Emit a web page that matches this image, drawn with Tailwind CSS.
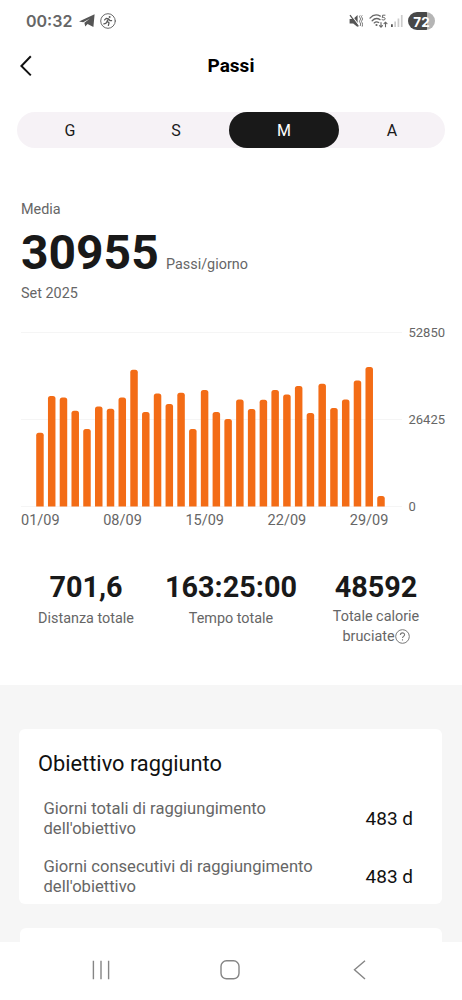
<!DOCTYPE html>
<html lang="it">
<head>
<meta charset="utf-8">
<title>Passi</title>
<script src="https://cdn.jsdelivr.net/npm/@tailwindcss/browser@4"></script>
</head>
<body class="w-[462px] h-[1000px] overflow-hidden bg-white flex flex-col font-['Roboto',sans-serif] text-[#1a1a1a] whitespace-nowrap">
<!-- Status bar -->
<header class="h-[42px] shrink-0 flex items-center justify-between pl-[26px] pr-[27px] text-[#666]">
  <div class="flex items-center">
    <span class="w-[53px] font-['Inter',sans-serif] font-semibold text-[16px] leading-5">00:32</span>
    <svg class="w-4 h-[14px]" viewBox="0 0 16 14"><path d="M0 7.4 15.6.3 14.4 13 8.6 10 6.2 12.6 5.4 8.8 11 4.4 4.2 8.2Z" fill="#555"/></svg>
    <svg class="ml-[5px] w-4 h-4" viewBox="0 0 16 16" fill="none" stroke="#5a5a5a" stroke-linecap="round" stroke-linejoin="round"><circle cx="8" cy="8" r="7.3" stroke-width=".9"/><circle cx="9.6" cy="3.9" r="1" fill="#5a5a5a" stroke="none"/><path d="M4.6 6.9 6.2 5.4 8.6 5.9 7 8.4 9 9.8 8.4 12.3M6.7 9 5.8 10.4 3.9 10.8M8.8 6.2 9.9 7.7 11.6 7.6" stroke-width="1.3"/></svg>
  </div>
  <div class="flex items-center">
    <svg class="w-[14px] h-[14px]" viewBox="0 0 14 14"><path d="M.6 4.9H4.2L8.6 1V13L4.2 9.5H.6Z" fill="#555"/><path d="M1.8.6 9.6 10.8" stroke="#fff" stroke-width="1.2"/><path d="M1 1.2 9.4 12.4" stroke="#555" stroke-width="1.2"/><path d="M11.2 1.4Q9.8 2.6 11 3.8T11 6.2 11 8.6 11.2 12M13.2 1.4Q11.8 2.6 13 3.8T13 6.2 13 8.6 13.2 12.6" fill="none" stroke="#666" stroke-width=".9"/></svg>
    <svg class="ml-[6px] w-[19px] h-[14px]" viewBox="0 0 19 14" fill="none" stroke="#666" stroke-width="1.3" stroke-linecap="round"><path d="M1 4.1C4 .7 8 .3 11.3 2.1M3.2 6.7C5.4 4.4 8.5 4.1 11 5.6M5.2 8.9C6.5 7.7 8.3 7.6 9.7 8.5"/><circle cx="7.5" cy="11" r="1.1" fill="#666" stroke="none"/><path d="M16 1.2H13.6L13.3 3.6C15.2 3 16.3 3.7 16.1 5 15.9 6.2 14.2 6.3 13 5.6" stroke-width="1"/><path d="M12 8.5V13M10.5 11.6 12 13.1 13.5 11.6M16.5 12.8V8.3M15 9.7 16.5 8.2 18 9.7" stroke-width="1.1"/></svg>
    <svg class="ml-[3px] w-3 h-[14px]" viewBox="0 0 12 14"><path d="M0 10.2H1.8V13H0Z" fill="#555"/><path d="M3.3 7.6H5V13H3.3ZM6.6 4.5H8.3V13H6.6ZM9.9.9H11.6V13H9.9Z" fill="#ccc"/></svg>
    <div class="ml-[5px] w-[27px] h-[18px] pt-px rounded-full bg-linear-to-r from-[#484848] from-[72%] to-[#b5b5b5] to-[72%] flex items-center justify-center font-['Inter',sans-serif] font-bold text-[13.5px] leading-4 text-white">72</div>
  </div>
</header>
<!-- Title bar -->
<div class="h-[48px] shrink-0 grid grid-cols-3 items-center pl-5 pr-5">
  <svg class="w-3 h-[22px]" viewBox="0 0 12 22" fill="none" stroke="#111" stroke-width="2"><path d="M10.8 1.2 1.4 11 10.8 20.4"/></svg>
  <h1 class="text-center font-bold text-[19px] leading-6 text-black">Passi</h1>
</div>
<!-- Period tabs -->
<nav class="mt-[22px] mx-[17px] h-9 shrink-0 rounded-full bg-[#f6f2f6] flex text-[16px] text-center leading-[37px]">
  <span class="w-[106px]">G</span><span class="w-[106px]">S</span><span class="w-[110px] rounded-full bg-[#191919] text-white">M</span><span class="w-[106px]">A</span>
</nav>
<!-- Average -->
<section class="mt-[51px] pl-[21px] shrink-0 text-[#666] text-[14.4px]">
  <p class="leading-[22px]">Media</p>
  <p class="flex items-baseline h-[62px] leading-[64px]"><span class="text-[48px] font-bold text-[#191919] w-[145px]">30955</span><span>Passi/giorno</span></p>
  <p class="leading-[22px]">Set 2025</p>
</section>
<!-- Chart -->
<section class="mt-[27px] pl-[21px] h-[200px] shrink-0 flex text-[#666]">
  <div class="w-[381px]">
    <svg id="plot" class="block w-[381px] h-[175px]" viewBox="0 0 381 175"><path d="M0 .5H381M0 87.5H381M0 174.5H381" stroke="#f5f5f5"/></svg>
    <div class="h-6 w-[411px] flex text-[14.5px] leading-[27px]">
      <span class="w-[82.3px]">01/09</span><span class="w-[82.3px]">08/09</span><span class="w-[82.3px]">15/09</span><span class="w-[82.3px]">22/09</span><span class="w-[82.3px]">29/09</span>
    </div>
  </div>
  <div class="pl-[6.5px] -mt-[7px] h-[190px] flex flex-col justify-between text-[13px] leading-4"><span>52850</span><span>26425</span><span>0</span></div>
</section>
<!-- Totals -->
<section class="mt-[38px] h-[115px] shrink-0 flex text-center text-[14.4px] text-[#666]">
  <div class="ml-[20px] w-[132px]"><p class="text-[28.8px] leading-[34px] font-bold text-[#191919]">701,6</p><p class="mt-[5px] leading-5">Distanza totale</p></div>
  <div class="ml-[10px] w-[138px]"><p class="text-[28.8px] leading-[34px] font-bold text-[#191919]">163:25:00</p><p class="mt-[5px] leading-5">Tempo totale</p></div>
  <div class="ml-[10px] w-[132px]"><p class="text-[28.8px] leading-[34px] font-bold text-[#191919]">48592</p><p class="mt-[3px] leading-[19.5px]">Totale calorie<br><span class="inline-flex items-center">bruciate<svg class="w-[15px] h-[15px]" viewBox="0 0 15 15" fill="none" stroke="#777"><circle cx="7.5" cy="7.5" r="6.8"/><path d="M5.4 6.1C5.4 3.1 9.6 3.2 9.6 5.8 9.6 7.5 7.5 7.3 7.5 9.1M7.5 10.3V11.4" stroke-width="1.1"/></svg></span></p></div>
</section>
<!-- Goals -->
<main class="h-[257px] shrink-0 bg-[#f6f6f6] pl-[19px] pt-11 overflow-hidden">
  <section class="h-[175px] w-[423px] rounded-[6px] bg-white pl-[19px] pr-[29px] pt-[21px]">
    <h2 class="text-[21.8px] leading-7 text-[#111]">Obiettivo raggiunto</h2>
    <div class="mt-[21px] pl-[5.5px] flex justify-between items-center leading-5 text-[#666]"><p class="text-[16.6px]">Giorni totali di raggiungimento<br>dell'obiettivo</p><span class="text-[19px] text-[#111]">483 d</span></div>
    <div class="mt-[18px] pl-[5.5px] flex justify-between items-center leading-5 text-[#666]"><p class="text-[16.6px]">Giorni consecutivi di raggiungimento<br>dell'obiettivo</p><span class="text-[19px] text-[#111]">483 d</span></div>
  </section>
  <section class="mt-6 ml-px h-10 w-[422px] rounded-[6px] bg-white"></section>
</main>
<!-- System navigation -->
<footer class="h-[58px] shrink-0 flex pl-[92px] pt-[18px]">
  <svg class="w-[18px] h-5" viewBox="0 0 18 20" stroke="#858585" stroke-width="1.4"><path d="M1.4.7V19.2M9 .7V19.2M16.6.7V19.2"/></svg>
  <svg class="ml-[110px] w-5 h-5" viewBox="0 0 20 20" fill="none" stroke="#858585" stroke-width="1.4"><rect x="1" y=".8" width="18" height="18" rx="5.5"/></svg>
  <svg class="ml-[113px] w-[13px] h-5" viewBox="0 0 13 20" fill="none" stroke="#858585" stroke-width="1.4"><path d="M12 .7 1.5 9.8 12 19"/></svg>
</footer>
<script>
const heights = [73.7,110.3,109,95.7,77.3,100,97.7,109,136.7,94.3,113,102.3,113.7,77.3,116.3,94.3,87.3,107,97.3,106.7,116.3,112,120.3,93.3,122.7,98.3,107,126,139.3,10.3];
const base = 174.4;
document.getElementById('plot').insertAdjacentHTML('beforeend', heights.map((h, i) => {
  const x = 15.2 + i * 11.76;
  return `<path fill="#f36c16" d="M${x} ${base}V${base - h + 2.5}q0-2.5 2.5-2.5h2.5q2.5 0 2.5 2.5V${base}z"/>`;
}).join(''));
</script>
</body>
</html>
